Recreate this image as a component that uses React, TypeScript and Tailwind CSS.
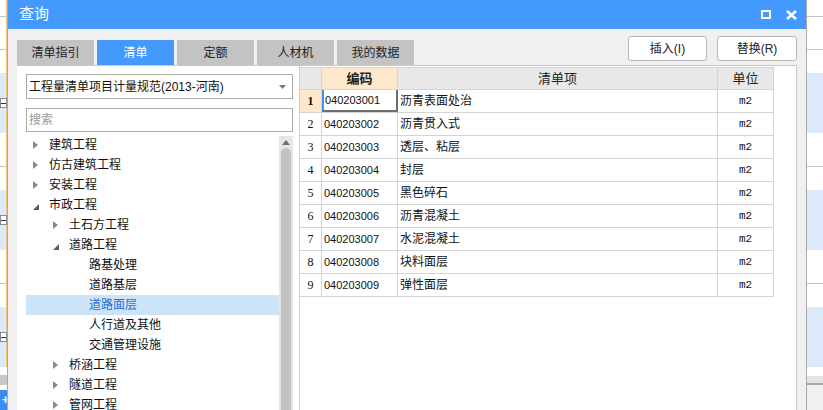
import React from 'react'

const FONT = "font-['Liberation_Sans','Noto_Sans_CJK_SC',sans-serif]"

const TABS = ['清单指引', '清单', '定额', '人材机', '我的数据']

interface TreeNode {
  label: string
  level: number
  state: 'collapsed' | 'expanded' | 'leaf'
  selected?: boolean
}

const TREE: TreeNode[] = [
  { label: '建筑工程', level: 0, state: 'collapsed' },
  { label: '仿古建筑工程', level: 0, state: 'collapsed' },
  { label: '安装工程', level: 0, state: 'collapsed' },
  { label: '市政工程', level: 0, state: 'expanded' },
  { label: '土石方工程', level: 1, state: 'collapsed' },
  { label: '道路工程', level: 1, state: 'expanded' },
  { label: '路基处理', level: 2, state: 'leaf' },
  { label: '道路基层', level: 2, state: 'leaf' },
  { label: '道路面层', level: 2, state: 'leaf', selected: true },
  { label: '人行道及其他', level: 2, state: 'leaf' },
  { label: '交通管理设施', level: 2, state: 'leaf' },
  { label: '桥涵工程', level: 1, state: 'collapsed' },
  { label: '隧道工程', level: 1, state: 'collapsed' },
  { label: '管网工程', level: 1, state: 'collapsed' },
]

const ROWS = [
  ['040203001', '沥青表面处治'],
  ['040203002', '沥青贯入式'],
  ['040203003', '透层、粘层'],
  ['040203004', '封层'],
  ['040203005', '黑色碎石'],
  ['040203006', '沥青混凝土'],
  ['040203007', '水泥混凝土'],
  ['040203008', '块料面层'],
  ['040203009', '弹性面层'],
]

const INDENT = ['pl-[7px]', 'pl-[27px]', 'pl-[47px]']

function Arrow({ state }: { state: TreeNode['state'] }) {
  if (state === 'collapsed') {
    return (
      <svg width="5" height="8" viewBox="0 0 5 8">
        <path d="M0 0 L5 4 L0 8 Z" fill="#8a8a8a" />
      </svg>
    )
  }
  if (state === 'expanded') {
    return (
      <svg width="6" height="6" viewBox="0 0 6 6" className="mt-[3px]">
        <path d="M6 0 L6 6 L0 6 Z" fill="#5a5a5a" />
      </svg>
    )
  }
  return null
}

// background app strip that peeks out at the dialog's sides
function SideStrip({ side }: { side: 'left' | 'right' }) {
  const edge = side === 'left' ? 'border-r border-r-[#f6c47c]' : ''
  const minus = side === 'left' && (
    <div className="flex h-[10px] w-[8px] items-center justify-center border border-[#8a8a8a] bg-white">
      <div className="h-px w-[5px] bg-[#333]" />
    </div>
  )
  return (
    <div className="flex h-full flex-col">
      <div className={`h-[17px] border-b border-[#c4c4c4] bg-white ${edge}`} />
      <div className={`h-[33px] border-b border-[#c4c4c4] bg-white ${edge}`} />
      <div className={`h-[23px] bg-white ${edge}`} />
      <div className={`flex h-[60px] items-center bg-[#dce9fb] ${edge}`}>{minus}</div>
      <div className={`h-[34px] border-b border-[#c4c4c4] bg-white ${edge}`} />
      <div className={`h-[23px] bg-white ${edge}`} />
      <div className={`flex h-[60px] items-center bg-[#dce9fb] ${edge}`}>{minus}</div>
      <div className={`h-[34px] border-b border-[#c4c4c4] bg-white ${edge}`} />
      <div className={`h-[23px] bg-white ${edge}`} />
      <div className={`flex h-[60px] items-center bg-[#dce9fb] ${edge}`}>{minus}</div>
      {side === 'left' ? (
        <>
          <div className="h-[8px] bg-white" />
          <div className="h-[10px] bg-[#c8c8c8]" />
          <div className="h-[5px] bg-white" />
          <div className="flex flex-1 items-center bg-[#3b8cf2] pl-[2px] text-[12px] font-bold leading-none text-white">+</div>
        </>
      ) : (
        <>
          <div className="h-[9px] bg-white" />
          <div className="h-[7px] bg-[#e4e4e4]" />
          <div className="h-[2px] bg-[#a8a8a8]" />
          <div className="flex-1 bg-[#f0f0f0]" />
        </>
      )}
    </div>
  )
}

export default function App() {
  return (
    <div className={`flex h-[410px] w-[823px] overflow-hidden bg-white ${FONT}`}>
      <div className="w-[7px] shrink-0">
        <SideStrip side="left" />
      </div>

      {/* dialog */}
      <div className="flex h-[440px] w-[800px] shrink-0 flex-col border-x border-[#a9a9a9] bg-[#f0f0f0]">
        <div className="flex h-[29px] shrink-0 items-center bg-[#4499ff] pl-[11px] pr-[9px] text-white">
          <span className="text-[15px]">查询</span>
          <div className="flex-1" />
          <div className="h-[9px] w-[10px] border-[2.5px] border-white" />
          <svg width="11" height="10" viewBox="0 0 11 10" className="ml-[15px]">
            <path d="M1 1 L10 9 M10 1 L1 9" stroke="white" strokeWidth="2.6" />
          </svg>
        </div>

        {/* tabs + buttons */}
        <div className="flex h-[36px] shrink-0 px-[9px]">
          <div className="flex gap-[3px] self-end">
            {TABS.map((t, i) => (
              <div
                key={t}
                className={`flex h-[25px] w-[77px] items-center justify-center text-[12px] ${
                  i === 1 ? 'bg-[#4499ff] text-white' : 'bg-[#c3c3c3] text-[#222]'
                }`}
              >
                {t}
              </div>
            ))}
          </div>
          <div className="flex-1" />
          <div className="mt-[7px] flex gap-[10px]">
            <button className="h-[25px] w-[79px] rounded-[3px] border border-[#b8b8b8] bg-white text-[12px] text-[#222]">
              插入(I)
            </button>
            <button className="h-[25px] w-[80px] rounded-[3px] border border-[#b8b8b8] bg-white text-[12px] text-[#222]">
              替换(R)
            </button>
          </div>
        </div>

        {/* content */}
        <div className="mx-[9px] flex flex-1 border-t border-r border-[#c8c8c8] bg-white">
          {/* left pane */}
          <div className="flex w-[283px] flex-col border-r border-[#cfcfcf] pl-[9px] pt-[8px]">
            <div className="flex h-[25px] w-[267px] items-center border border-[#ababab] pl-[2px] pr-[6px] text-[12px] text-[#111]">
              <span className="flex-1">工程量清单项目计量规范(2013-河南)</span>
              <svg width="7" height="4" viewBox="0 0 7 4">
                <path d="M0 0 L7 0 L3.5 4 Z" fill="#7a7a7a" />
              </svg>
            </div>
            <div className="mt-[9px] flex h-[24px] w-[267px] items-center border border-[#ababab] pl-[2px] text-[12px] text-[#9a9a9a]">
              搜索
            </div>
            <div className="mt-[3px] flex flex-1">
              <div className="w-[253px]">
                {TREE.map((n) => (
                  <div
                    key={n.label}
                    className={`flex h-[20px] items-center text-[12px] ${INDENT[n.level]} ${
                      n.selected ? 'bg-[#cce4f7] text-[#1e6fd9]' : 'text-[#111]'
                    }`}
                  >
                    <div className="flex w-[16px] items-center">
                      <Arrow state={n.state} />
                    </div>
                    <span>{n.label}</span>
                  </div>
                ))}
              </div>
              {/* scrollbar */}
              <div className="mt-[1px] flex w-[14px] flex-col items-center bg-[#e6e6e6]">
                <svg width="8" height="5" viewBox="0 0 8 5" className="mt-[4px]">
                  <path d="M0 5 L4 0 L8 5 Z" fill="#6e6e6e" />
                </svg>
                <div className="mt-[3px] w-[10px] flex-1 rounded-t-[5px] bg-[#c2c2c2]" />
              </div>
            </div>
          </div>

          {/* right pane: table */}
          <div className="flex-1 pt-px">
            <div className="flex h-[23px] w-[474px] border-y border-[#d4d4d4] text-[13px] text-[#222]">
              <div className="w-[22px] border-r border-[#d4d4d4] bg-[#e8e8e8]" />
              <div className="flex w-[76px] items-center justify-center border-r border-[#d4d4d4] bg-[#fde8cb] font-bold">编码</div>
              <div className="flex w-[320px] items-center justify-center border-r border-[#d4d4d4] bg-[#e8e8e8]">清单项</div>
              <div className="flex w-[56px] items-center justify-center border-r border-[#d4d4d4] bg-[#e8e8e8]">单位</div>
            </div>
            {ROWS.map(([code, name], i) => (
              <div key={code} className="flex h-[23px] w-[474px] border-b border-[#d4d4d4] text-[#111]">
                <div
                  className={`flex w-[22px] items-center justify-center border-r border-[#d4d4d4] font-['Liberation_Serif',serif] text-[12px] ${
                    i === 0 ? 'bg-[#fde8cb] font-bold' : ''
                  }`}
                >
                  {i + 1}
                </div>
                <div
                  className={`flex w-[76px] items-center text-[11px] ${
                    i === 0
                      ? 'border-r-2 border-b-2 border-l-2 border-[#6e6e6e] border-l-[#4a90e2] pl-px'
                      : 'border-r border-[#d4d4d4] pl-[2px]'
                  }`}
                >
                  {code}
                </div>
                <div className="flex w-[320px] items-center border-r border-[#d4d4d4] pl-[2px] text-[12px]">{name}</div>
                <div className="flex w-[56px] items-center justify-center border-r border-[#d4d4d4] font-['Liberation_Mono',monospace] text-[11px]">
                  m2
                </div>
              </div>
            ))}
          </div>
        </div>
      </div>

      <div className="flex-1">
        <SideStrip side="right" />
      </div>
    </div>
  )
}
